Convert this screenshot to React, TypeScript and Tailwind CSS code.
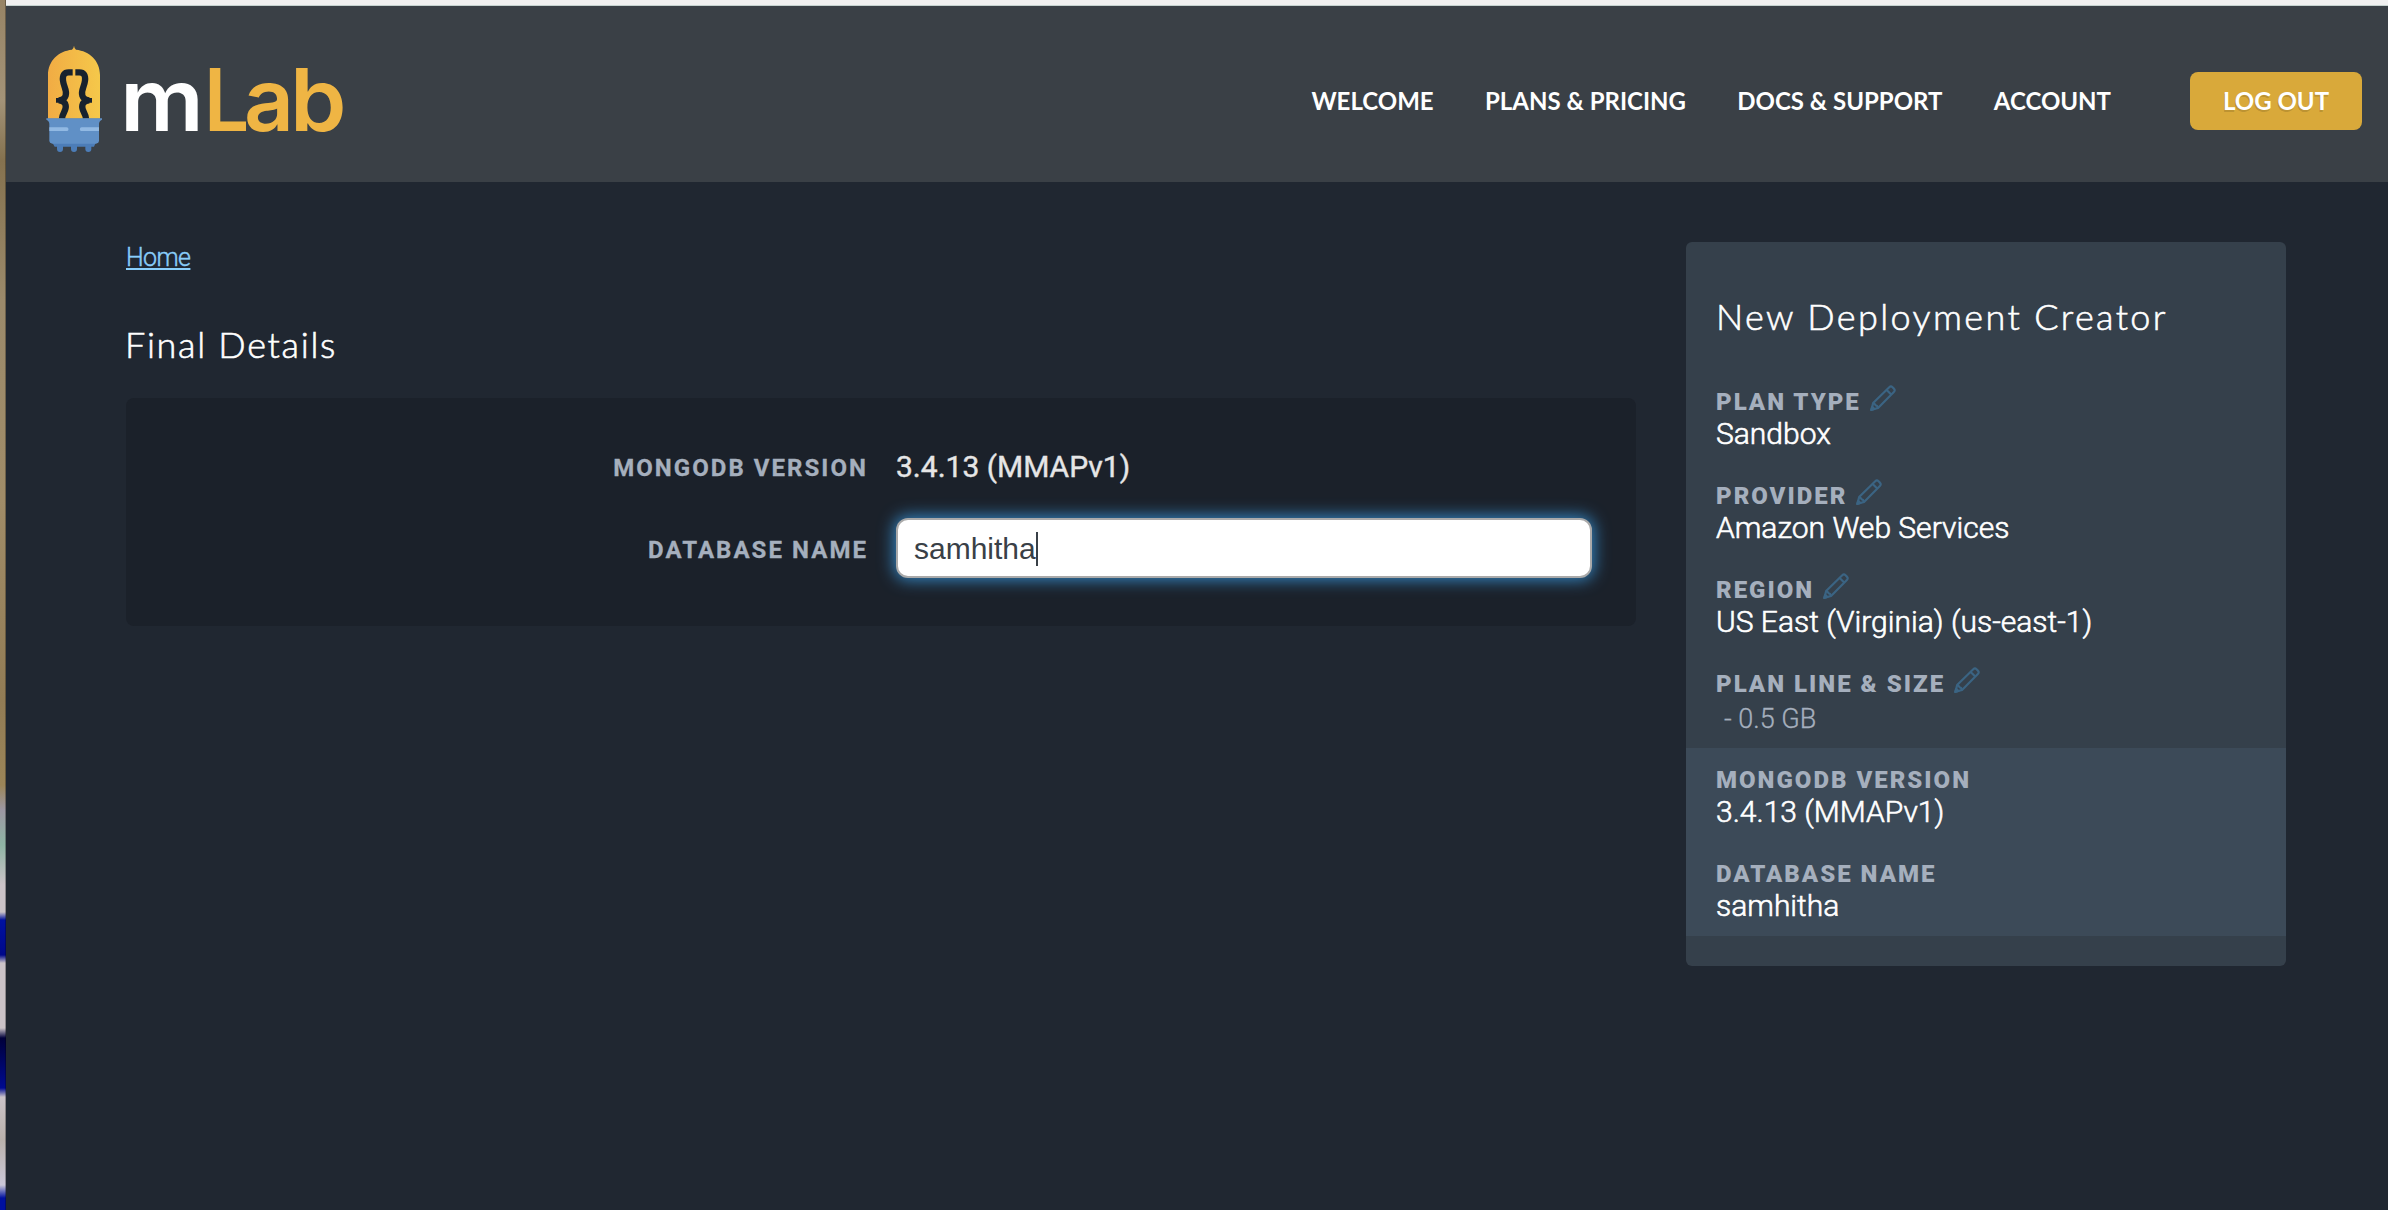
import React from "react";

const NAV_ITEMS = ["WELCOME", "PLANS & PRICING", "DOCS & SUPPORT", "ACCOUNT"];

const STEPS = [
  { label: "PLAN TYPE", value: "Sandbox" },
  { label: "PROVIDER", value: "Amazon Web Services" },
  { label: "REGION", value: "US East (Virginia) (us-east-1)" },
];

const CURRENT = [
  { label: "MONGODB VERSION", value: "3.4.13 (MMAPv1)" },
  { label: "DATABASE NAME", value: "samhitha" },
];

const BRACE =
  "M128 97 H116 Q96 97 99 122 C101 142 112 150 107 167 Q103 180 86 181 Q104 182 107 196 C110 212 97 218 96 236";

function Bulb() {
  return (
    <svg className="h-[120px] w-[90px] shrink-0" viewBox="0 0 270 360">
      <defs>
        <linearGradient id="glass" x1="0" x2="1" y1="0" y2="0">
          <stop offset="0" stopColor="#f1ac44" />
          <stop offset="1" stopColor="#f5c84a" />
        </linearGradient>
      </defs>
      <path
        d="M54 236 V105 C54 62 86 33 126 29 Q131 26 132 17 Q133 26 138 29 C178 33 210 62 210 105 V236 Z"
        fill="url(#glass)"
      />
      <g fill="none" stroke="#18222e" strokeWidth="19">
        <path d={BRACE} />
        <path d={BRACE} transform="matrix(-1 0 0 1 264 0)" />
      </g>
      <path d="M78 174 H100 V188 H78 Z M186 174 H164 V188 H186 Z" fill="#18222e" />
      <path
        d="M66 306 H198 L192 320 H184 V327 A9 9 0 0 1 166 327 V320 H141 V327 A9 9 0 0 1 123 327 V320 H99 V327 A9 9 0 0 1 81 327 V320 H74 Z"
        fill="#4c7db8"
      />
      <path
        d="M49 235 H216 V239 Q207 243 207 252 V303 Q207 309 198 311 H67 Q58 309 58 303 V252 Q58 243 49 239 Z"
        fill="#6090c6"
      />
      <path
        d="M58 262 H110 A5.5 5.5 0 0 1 110 273 H58 Z M207 262 H155 A5.5 5.5 0 0 0 155 273 H207 Z"
        fill="#91b9e3"
      />
    </svg>
  );
}

function Pencil() {
  return (
    <svg
      className="mt-[-8px] ml-[9px] h-[26px] w-[26px] shrink-0"
      viewBox="0 0 78 79"
      fill="none"
      stroke="#3b6483"
      strokeWidth="6.5"
      strokeLinejoin="round"
    >
      <path d="M4 75 L9 55 L58 7 Q63 2 68 7 L72 11 Q77 16 72 21 L24 70 Z" />
      <path d="M50 15 L64 29 M9 55 L14 58 L17 62 L21 64 L24 70" />
      <path d="M3 76 L6 66 L13 73 Z" fill="#3b6483" />
    </svg>
  );
}

function Entry({ label, editable, children }: { label: string; editable?: boolean; children: React.ReactNode }) {
  return (
    <div className="flex flex-col">
      <div className="flex h-8 items-center text-[24px] leading-8 font-black tracking-[2px] text-[#a5afbd]">
        <span>{label}</span>
        {editable && <Pencil />}
      </div>
      {children}
    </div>
  );
}

function Value({ children }: { children: React.ReactNode }) {
  return (
    <div className="text-[30px] leading-8 font-light whitespace-nowrap text-white [-webkit-text-stroke:0.6px_white]">
      {children}
    </div>
  );
}

export default function App() {
  return (
    <div className="flex h-[1210px] w-[2388px] overflow-hidden bg-[#202731] font-[Roboto,sans-serif]">
      <div className="w-[6px] shrink-0 border-r border-black/30 bg-[linear-gradient(#978465_0px,#a39378_100px,#85724f_160px,#9b8a6b_300px,#a08c68_500px,#927c55_700px,#9b8558_785px,#9c97a3_810px,#8fb5a5_845px,#cbc3c8_885px,#cbc3c8_912px,#0011a0_920px,#00088a_955px,#cbc3c8_963px,#cbc3c8_1028px,#00003a_1038px,#000a90_1088px,#cbc3c8_1097px,#b9b1ac_1140px,#cbc8d8_1185px,#0010a0_1198px)]" />
      <div className="flex min-w-0 flex-1 flex-col">
        <div className="h-[6px] shrink-0 border-b border-[#c5d2cf] bg-[#f0f0f0]" />

        <header className="flex h-[176px] shrink-0 items-start bg-[#3a4046]">
          <div className="flex pt-[34px] pl-[24px]">
            <Bulb />
            <div className="flex h-[88px] pt-[16px] font-[Inter,sans-serif] text-[87px] leading-[88px] font-semibold">
              <span className="mr-[5px] w-[79px] origin-left scale-x-[1.07] text-white">m</span>
              <span className="w-[40px] origin-left scale-x-[0.92] text-[#efb544]">L</span>
              <span className="w-[46px] text-[#efb544]">a</span>
              <span className="w-[50px] origin-left scale-x-[1.04] text-[#efb544]">b</span>
            </div>
          </div>
          <nav className="mt-[66px] ml-auto flex h-[58px] items-center gap-[51.3px] pr-[79px] font-[Lato,sans-serif] text-[24px] font-bold whitespace-nowrap text-white">
            {NAV_ITEMS.map((item) => (
              <a key={item}>{item}</a>
            ))}
          </nav>
          <button className="mt-[66px] mr-[26px] h-[58px] w-[172px] rounded-lg bg-[#d9a93a] font-[Lato,sans-serif] text-[24px] font-bold text-white [text-shadow:-1px_2px_0_rgba(0,0,0,0.15)]">
            LOG OUT
          </button>
        </header>

        <div className="flex items-start">
          <main className="ml-[120px] flex w-[1510px] flex-col">
            <a className="mt-[60px] h-8 self-start text-[25px] leading-8 font-light tracking-[-0.6px] text-[#89cefa] underline decoration-2 underline-offset-[2px] [-webkit-text-stroke:0.4px_#89cefa]">
              Home
            </a>
            <h1 className="mt-[50px] -ml-px h-10 font-[Lato,sans-serif] text-[36px] leading-10 font-light tracking-[1.7px] text-white [-webkit-text-stroke:0.6px_white]">
              Final Details
            </h1>
            <section className="mt-[34px] flex h-[228px] flex-col rounded-lg bg-[#1b212a] pt-[52px]">
              <div className="flex h-9 items-center gap-[28px]">
                <div className="w-[742px] text-right text-[24px] font-bold tracking-[2.05px] text-[#a5afbd] [-webkit-text-stroke:0.3px_#a5afbd]">
                  MONGODB VERSION
                </div>
                <div className="pb-[3px] text-[30px] text-[#e6e6e6] [-webkit-text-stroke:0.4px_#e6e6e6]">
                  3.4.13 (MMAPv1)
                </div>
              </div>
              <div className="mt-8 flex h-[60px] items-center gap-[28px]">
                <div className="w-[742px] pt-[3px] text-right text-[24px] font-bold tracking-[2.05px] text-[#a5afbd] [-webkit-text-stroke:0.3px_#a5afbd]">
                  DATABASE NAME
                </div>
                <div className="flex h-[60px] w-[696px] items-center rounded-[12px] border-2 border-[#aaaaaa] bg-white pt-[2px] pl-[16px] font-['Liberation_Sans',sans-serif] text-[30px] leading-[34px] text-[#394047] shadow-[0_0_16px_2px_#3586c2]">
                  <span>samhitha</span>
                  <span className="h-[34px] w-[2px] bg-[#394047]" />
                </div>
              </div>
            </section>
          </main>

          <aside className="mt-[60px] ml-[50px] flex w-[600px] flex-col overflow-hidden rounded-md bg-[#35404b] pt-[54px] pb-[30px]">
            <h2 className="mb-[50px] h-10 pl-[30px] font-[Lato,sans-serif] text-[36px] leading-10 font-light tracking-[2.38px] whitespace-nowrap text-white [-webkit-text-stroke:0.6px_white]">
              New Deployment Creator
            </h2>
            <div className="flex flex-col gap-[30px] pb-4 pl-[30px]">
              {STEPS.map((s) => (
                <Entry key={s.label} label={s.label} editable>
                  <Value>{s.value}</Value>
                </Entry>
              ))}
              <Entry label="PLAN LINE & SIZE" editable>
                <div className="h-8 pt-[3px] pl-2 text-[27px] leading-8 font-light text-[#a5afbd] [-webkit-text-stroke:0.3px_#a5afbd]">
                  - 0.5 GB
                </div>
              </Entry>
            </div>
            <div className="flex flex-col gap-[30px] bg-[#3c4a58] pt-4 pb-[14px] pl-[30px]">
              {CURRENT.map((s) => (
                <Entry key={s.label} label={s.label}>
                  <Value>{s.value}</Value>
                </Entry>
              ))}
            </div>
          </aside>
        </div>
      </div>
    </div>
  );
}
